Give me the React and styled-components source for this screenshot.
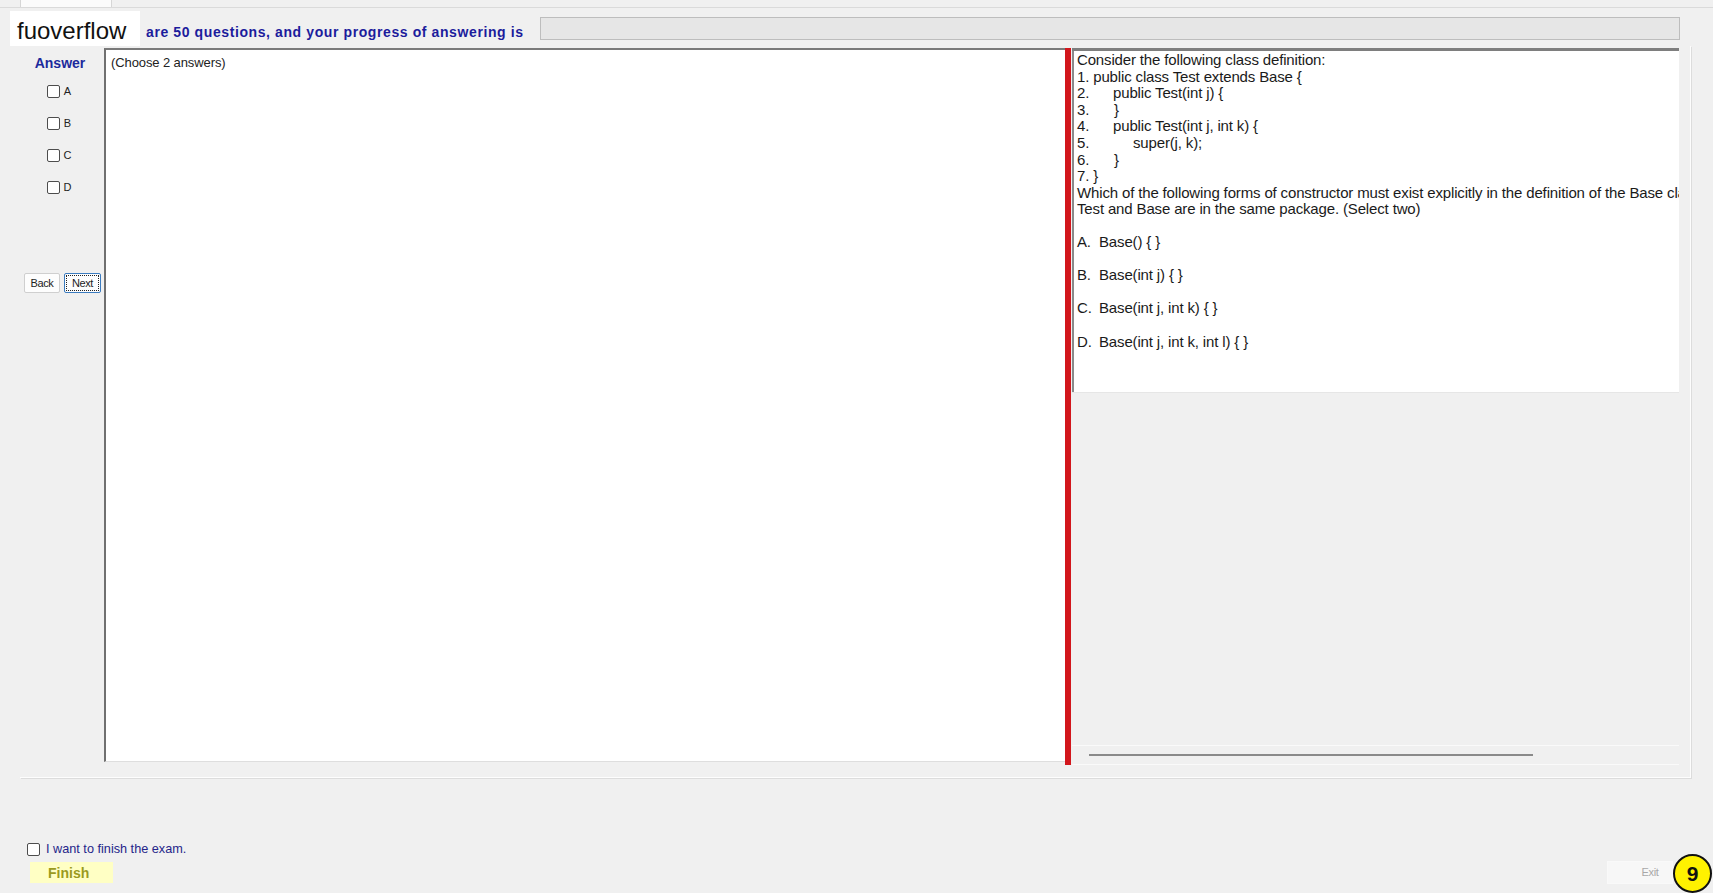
import React from 'react';
import styled, { createGlobalStyle } from 'styled-components';

const Global = createGlobalStyle`
  html, body {
    margin: 0;
    padding: 0;
    background: #f0f0f0;
  }
  body {
    font-family: "Liberation Sans", Arial, sans-serif;
  }
`

const Page = styled.div`
  position: relative;
  width: 1713px;
  height: 893px;
  overflow: hidden;
  background: #f0f0f0;
  display: flex;
  flex-direction: column;
`
const TabStrip = styled.div`
  height: 7px;
  border-bottom: 1px solid #dadada;
  display: flex;
`
const Tab = styled.div`
  margin-left: 20px;
  width: 90px;
  height: 7px;
  background: #fbfbfb;
  border: 1px solid #d6d6d6;
  border-top: none;
  border-bottom: none;
`
const HeaderRow = styled.div`
  display: flex;
  align-items: center;
  height: 35px;
  margin-top: 3px;
`
const Logo = styled.div`
  margin-left: 10px;
  width: 123px;
  height: 35px;
  padding-left: 7px;
  background: #fff;
  color: #111;
  font-size: 24px;
  line-height: 40px;
`
const HeaderText = styled.div`
  margin-left: 6px;
  margin-top: 6px;
  font-size: 14px;
  font-weight: bold;
  letter-spacing: 0.6px;
  color: #1c1c9c;
`
const Progress = styled.div`
  margin-left: 16px;
  width: 1138px;
  height: 21px;
  background: #e6e6e6;
  border: 1px solid #bdbdbd;
`
const Group = styled.div`
  margin-left: 20px;
  width: 1670px;
  height: 729px;
  padding-top: 2px;
  border-right: 1px solid #fdfdfd;
  border-bottom: 1px solid #fdfdfd;
  box-shadow: 1px 1px 0 #dcdcdc;
  display: flex;
`
const LeftCol = styled.div`
  width: 84px;
  display: flex;
  flex-direction: column;
  align-items: center;
  padding-top: 7px;
`
const AnswerTitle = styled.div`
  font-size: 14px;
  font-weight: bold;
  color: #1c2a9c;
  margin-left: -4px;
  margin-bottom: 4px;
`
const OptionRow = styled.label`
  display: flex;
  align-items: center;
  gap: 4px;
  height: 32px;
  margin-left: -6px;
  font-size: 11px;
  color: #222;
`
const Box = styled.span`
  display: inline-block;
  width: 11px;
  height: 11px;
  border: 1px solid #4d4d4d;
  border-radius: 2px;
  background: #fff;
`
const NavRow = styled.div`
  display: flex;
  gap: 4px;
  margin-top: 70px;
  margin-left: 1px;
`
const NavButton = styled.button`
  width: ${p => p.$w}px;
  height: 20px;
  padding: 0;
  background: #fdfdfd;
  border: 1px solid ${p => (p.$focus ? '#3b7bbf' : '#cfcfcf')};
  outline: ${p => (p.$focus ? '1px dotted #222' : 'none')};
  outline-offset: -3px;
  border-radius: 2px;
  font-family: "Liberation Sans", Arial, sans-serif;
  font-size: 11px;
  letter-spacing: -0.4px;
  color: #222;
`
const QuestionBox = styled.div`
  width: 961px;
  height: 714px;
  background: #fff;
  border-left: 2px solid #707070;
  border-top: 2px solid #7a7a7a;
  border-bottom: 1px solid #dedede;
  padding: 5px 0 0 5px;
  box-sizing: border-box;
  font-size: 13px;
  letter-spacing: -0.1px;
  color: #222;
`
const Splitter = styled.div`
  width: 6px;
  height: 717px;
  background: #d2161c;
`
const RightPanel = styled.div`
  width: 607px;
  height: 717px;
  display: flex;
  flex-direction: column;
  border-top: 3px solid #7e7e7e;
  box-sizing: border-box;
  margin-left: 1px;
`
const ContentArea = styled.div`
  height: 340px;
  background: #fff;
  border-left: 2px solid #8a8a8a;
  padding: 1px 0 0 3px;
  overflow: hidden;
  font-size: 15px;
  line-height: 16.6px;
  letter-spacing: -0.15px;
  color: #1a1a1a;
  white-space: nowrap;
`
const Line = styled.div`
  display: flex;
`
const Num = styled.span`
  width: ${p => p.$w}px;
  flex: none;
`
const Choice = styled.div`
  margin-top: ${p => p.$first ? 16 : 16.6}px;
  display: flex;
`
const ChoiceLetter = styled.span`
  width: 22px;
  flex: none;
`
const GreyArea = styled.div`
  flex: 1;
  display: flex;
  flex-direction: column;
  justify-content: flex-end;
  border-top: 1px solid #e6e6e6;
`
const ScrollBand = styled.div`
  height: 18px;
  border-top: 1px solid #fafafa;
  border-bottom: 1px solid #fafafa;
  display: flex;
  align-items: center;
`
const ScrollThumb = styled.div`
  margin-left: 17px;
  width: 444px;
  height: 2px;
  background: #8a8a8a;
`
const Footer = styled.div`
  flex: 1;
  display: flex;
  flex-direction: column;
  padding-top: 64px;
`
const FinishCheck = styled.label`
  display: flex;
  align-items: center;
  gap: 6px;
  margin-left: 27px;
  font-size: 12.7px;
  letter-spacing: 0px;
  color: #25258a;
`
const ButtonRow = styled.div`
  display: flex;
  justify-content: space-between;
  margin-top: 6px;
`
const FinishButton = styled.div`
  margin-left: 30px;
  width: 83px;
  height: 21px;
  background: #ffffc4;
  color: #9a9a1e;
  font-size: 14px;
  font-weight: bold;
  line-height: 22px;
  text-indent: 18px;
`
const ExitButton = styled.div`
  margin-right: 41px;
  width: 64px;
  height: 21px;
  padding-left: 20px;
  box-sizing: border-box;
  background: #f7f7f7;
  color: #a8a8a8;
  font-size: 11px;
  letter-spacing: -0.3px;
  line-height: 21px;
  text-align: center;
  box-shadow: 0 0 0 1px #f9f9f9;
`
const Badge = styled.div`
  position: absolute;
  left: 1673px;
  top: 854px;
  width: 35px;
  height: 35px;
  border-radius: 50%;
  background: #fff200;
  border: 2px solid #111;
  font-size: 21px;
  font-weight: bold;
  color: #111;
  text-align: center;
  line-height: 36px;
`

const code = [
  { n: '1.', w: 0, text: '1. public class Test extends Base {' },
  { n: '2.', w: 36, text: 'public Test(int j) {' },
  { n: '3.', w: 37, text: '}' },
  { n: '4.', w: 36, text: 'public Test(int j, int k) {' },
  { n: '5.', w: 56, text: 'super(j, k);' },
  { n: '6.', w: 37, text: '}' },
  { n: '7.', w: 0, text: '7. }' },
]

const choices = [
  ['A.', 'Base() { }'],
  ['B.', 'Base(int j) { }'],
  ['C.', 'Base(int j, int k) { }'],
  ['D.', 'Base(int j, int k, int l) { }'],
]

const App = () => {
  return (
    <Page>
      <Global />
      <TabStrip><Tab /></TabStrip>
      <HeaderRow>
        <Logo>fuoverflow</Logo>
        <HeaderText>are 50 questions, and your progress of answering is</HeaderText>
        <Progress />
      </HeaderRow>
      <Group>
        <LeftCol>
          <AnswerTitle>Answer</AnswerTitle>
          {['A', 'B', 'C', 'D'].map(l => (
            <OptionRow key={l}><Box />{l}</OptionRow>
          ))}
          <NavRow>
            <NavButton $w={36}>Back</NavButton>
            <NavButton $w={37} $focus>Next</NavButton>
          </NavRow>
        </LeftCol>
        <QuestionBox>(Choose 2 answers)</QuestionBox>
        <Splitter />
        <RightPanel>
          <ContentArea>
            <div>Consider the following class definition:</div>
            {code.map(c => (
              c.w === 0
                ? <Line key={c.n}>{c.text}</Line>
                : <Line key={c.n}><Num $w={c.w}>{c.n}</Num>{c.text}</Line>
            ))}
            <div>Which of the following forms of constructor must exist explicitly in the definition of the Base class?</div>
            <div>Test and Base are in the same package. (Select two)</div>
            {choices.map(([l, t], i) => (
              <Choice key={l} $first={i === 0}><ChoiceLetter>{l}</ChoiceLetter>{t}</Choice>
            ))}
          </ContentArea>
          <GreyArea>
            <ScrollBand><ScrollThumb /></ScrollBand>
          </GreyArea>
        </RightPanel>
      </Group>
      <Footer>
        <FinishCheck><Box />I want to finish the exam.</FinishCheck>
        <ButtonRow>
          <FinishButton>Finish</FinishButton>
          <ExitButton>Exit</ExitButton>
        </ButtonRow>
      </Footer>
      <Badge>9</Badge>
    </Page>
  );
}
export default App
